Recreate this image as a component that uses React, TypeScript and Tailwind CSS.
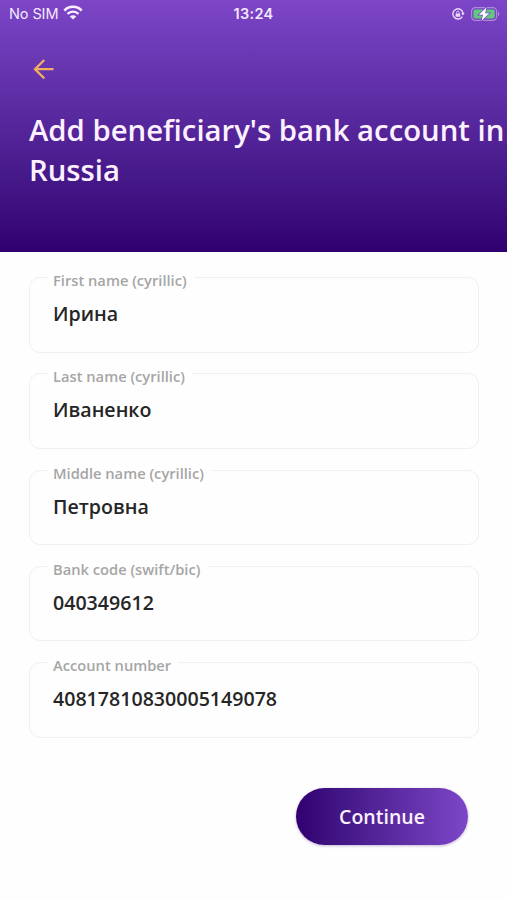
import { useState } from 'react'

interface Field {
  id: string
  label: string
  value: string
}

const initialFields: Field[] = [
  { id: 'firstName', label: 'First name (cyrillic)', value: 'Ирина' },
  { id: 'lastName', label: 'Last name (cyrillic)', value: 'Иваненко' },
  { id: 'middleName', label: 'Middle name (cyrillic)', value: 'Петровна' },
  { id: 'bankCode', label: 'Bank code (swift/bic)', value: '040349612' },
  { id: 'accountNumber', label: 'Account number', value: '40817810830005149078' },
]

function WifiIcon() {
  return (
    <svg width="20" height="15" viewBox="0 0 20 15" fill="none" stroke="#fbeeff">
      <path d="M1.3 5.6C6 0.6 14 0.6 18.7 5.6" strokeWidth="2.5" />
      <path d="M4.5 8.9C7.5 5.9 12.5 5.9 15.5 8.9" strokeWidth="2.4" />
      <path d="M10 14.6L6.8 11.4C8.5 9.8 11.5 9.8 13.2 11.4Z" fill="#fbeeff" stroke="none" />
    </svg>
  )
}

function RotationLockIcon() {
  return (
    <svg width="14" height="14" viewBox="0 0 14 14" fill="none" stroke="#eed8f8">
      <path d="M11.3 9.6A5.1 5.1 0 1 1 12 6.2" strokeWidth="1.4" />
      <path d="M10.1 6.1H13.7L11.9 8.6Z" fill="#eed8f8" stroke="none" />
      <rect x="4.6" y="6.4" width="4.6" height="3.4" rx="0.5" fill="#eed8f8" stroke="none" />
      <path d="M5.6 6.5V5.5A1.3 1.3 0 0 1 8.2 5.5V6.5" strokeWidth="0.9" />
    </svg>
  )
}

function BatteryIcon() {
  return (
    <svg width="30" height="16" viewBox="0 0 30 16" fill="none">
      <rect x="0.6" y="1.6" width="25" height="12.8" rx="3.8" stroke="#a98bd8" strokeWidth="1.2" />
      <rect x="2.5" y="3.5" width="21.2" height="9" rx="2" fill="#62c880" />
      <path d="M27 5.8C28.9 6.5 28.9 9.5 27 10.2Z" fill="#a98bd8" />
      <path
        d="M15.5 1.3L7.8 8.8H12L10.5 14.7L18.4 7.2H14.1Z"
        fill="#fff"
        stroke="#7142c0"
        strokeWidth="1.4"
        paintOrder="stroke"
      />
    </svg>
  )
}

function StatusBar() {
  return (
    <div className="grid h-7 grid-cols-3 items-center pl-[9px] pr-[9px] font-['Inter',sans-serif] text-[#f6e8ff]">
      <div className="flex items-center gap-[5px]">
        <span className="text-[14.5px] leading-7 tracking-[-0.1px]">No SIM</span>
        <div className="pb-[3px]">
          <WifiIcon />
        </div>
      </div>
      <span className="text-center text-[14.5px] font-semibold leading-7 tracking-[0.3px]">13:24</span>
      <div className="-mr-[3px] flex items-center justify-end gap-[6px] pb-px">
        <RotationLockIcon />
        <BatteryIcon />
      </div>
    </div>
  )
}

export default function App() {
  const [fields, setFields] = useState<Field[]>(initialFields)

  const update = (id: string, value: string) => {
    setFields((prev) => prev.map((f) => (f.id === id ? { ...f, value } : f)))
  }

  return (
    <div className="flex h-[900px] w-[507px] flex-col overflow-hidden bg-[#fefefe] font-['Open_Sans','Noto_Sans',sans-serif]">
      <header className="h-[252px] shrink-0 bg-linear-to-b from-[#7d46c8] to-[#310070]">
        <StatusBar />
        <button aria-label="Back" className="ml-[33px] mt-[31px] block">
          <svg width="22" height="20" viewBox="0 0 22 20" fill="none" stroke="#f3ae62" strokeWidth="2.3">
            <path d="M20.5 10.2H2M11.3 1L2 10.2L11.3 19.4" />
          </svg>
        </button>
        <h1 className="ml-[29px] mt-[31px] whitespace-nowrap text-[29.3px] font-semibold leading-10 text-[#fdf0ff]">
          Add beneficiary&apos;s bank account in
          <br />
          Russia
        </h1>
      </header>

      <form className="flex flex-1 flex-col pl-[29px] pr-[28px] pt-[15.5px]" onSubmit={(e) => e.preventDefault()}>
        <div className="flex flex-col gap-[11.25px]">
          {fields.map((field) => (
            <fieldset
              key={field.id}
              className="h-[85px] min-w-0 rounded-[11px] border border-[#f0f0f0] pl-[18px]"
            >
              <legend className="h-5 px-[5px] pr-[7px] pt-[6.5px] text-[14.7px] font-semibold leading-[13px] text-[#a6a6a6]">
                {field.label}
              </legend>
              <input
                aria-label={field.label}
                value={field.value}
                onChange={(e) => update(field.id, e.target.value)}
                className="mt-[11.5px] block h-[30px] w-[400px] bg-transparent pl-[5px] text-[19.6px] font-semibold leading-[30px] text-[#262626] outline-none"
              />
            </fieldset>
          ))}
        </div>

        <button
          type="submit"
          className="mr-[11px] mt-[50.5px] h-[57px] w-[172px] self-end rounded-full bg-linear-to-r from-[#310070] to-[#7d46c8] text-[19.5px] font-semibold text-[#fdf0ff] shadow-[0_1px_3px_rgba(60,20,120,0.3)]"
        >
          Continue
        </button>
      </form>
    </div>
  )
}
